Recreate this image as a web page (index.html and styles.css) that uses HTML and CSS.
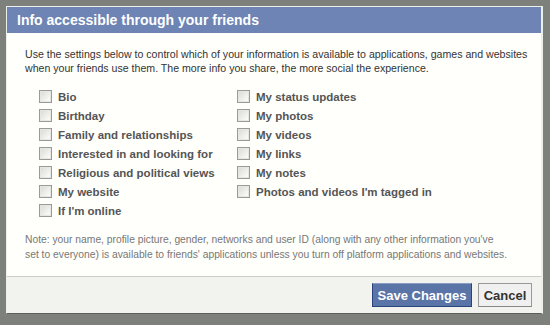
FILE: index.html
```html
<!DOCTYPE html>
<html>
<head>
<meta charset="utf-8">
<link rel="stylesheet" href="styles.css">
</head>
<body>
<div class="page">
  <div class="dialog">
    <div class="header">Info accessible through your friends</div>
    <div class="content">
      <p class="intro">Use the settings below to control which of your information is available to applications, games and websites<br>when your friends use them. The more info you share, the more social the experience.</p>
      <div class="options">
        <div class="col">
          <label class="opt"><span class="box"></span>Bio</label>
          <label class="opt"><span class="box"></span>Birthday</label>
          <label class="opt"><span class="box"></span>Family and relationships</label>
          <label class="opt"><span class="box"></span>Interested in and looking for</label>
          <label class="opt"><span class="box"></span>Religious and political views</label>
          <label class="opt"><span class="box"></span>My website</label>
          <label class="opt"><span class="box"></span>If I'm online</label>
        </div>
        <div class="col">
          <label class="opt"><span class="box"></span>My status updates</label>
          <label class="opt"><span class="box"></span>My photos</label>
          <label class="opt"><span class="box"></span>My videos</label>
          <label class="opt"><span class="box"></span>My links</label>
          <label class="opt"><span class="box"></span>My notes</label>
          <label class="opt"><span class="box"></span>Photos and videos I'm tagged in</label>
        </div>
      </div>
      <p class="note">Note: your name, profile picture, gender, networks and user ID (along with any other information you've<br>set to everyone) is available to friends' applications unless you turn off platform applications and websites.</p>
    </div>
    <div class="footer">
      <button class="btn save">Save Changes</button>
      <button class="btn cancel">Cancel</button>
    </div>
  </div>
</div>
</body>
</html>
```

FILE: styles.css
```css
html, body {
  margin: 0;
  padding: 0;
  background: #7e807c;
}
.page {
  width: 550px;
  height: 325px;
  padding: 6px 0 0 6px;
  box-sizing: border-box;
  overflow: hidden;
  font-family: "Liberation Sans", Arial, sans-serif;
}
.dialog {
  width: 537px;
  border: 1px solid #eeeeea;
  border-right-width: 2px;
  border-bottom-color: #5c5e5a;
  background: #fffffb;
  box-sizing: border-box;
}
.header {
  height: 26px;
  background: #6d84b4;
  color: #ffffff;
  font-weight: bold;
  font-size: 14px;
  line-height: 26px;
  padding-left: 10px;
}
.content {
  padding: 14px 2px 0 18px;
  height: 243px;
  box-sizing: border-box;
  color: #333333;
}
.intro {
  margin: 0;
  font-size: 10.6px;
  line-height: 14px;
}
.options {
  display: grid;
  grid-template-columns: 198px 1fr;
  padding: 12px 0 0 14px;
}
.col {
  display: flex;
  flex-direction: column;
}
.opt {
  display: flex;
  align-items: center;
  height: 19px;
  font-size: 11.5px;
  font-weight: bold;
  color: #555555;
}
.box {
  width: 13px;
  height: 13px;
  box-sizing: border-box;
  border: 1px solid #9a9a9a;
  background: linear-gradient(135deg, #d8d8d4 0%, #f4f4f2 70%, #ffffff 100%);
  box-shadow: inset 0 0 0 1px #e6e6e2;
  margin-right: 6px;
  flex: none;
}
.note {
  margin: 12px 0 0 0;
  font-size: 10.3px;
  line-height: 15px;
  color: #777777;
}
.footer {
  height: 36px;
  border-top: 1px solid #cccccc;
  background: #f2f2ee;
  display: flex;
  justify-content: flex-end;
  align-items: center;
  gap: 6px;
  padding-right: 9px;
}
.btn {
  height: 24px;
  font-family: "Liberation Sans", Arial, sans-serif;
  font-weight: bold;
  font-size: 13px;
  padding: 0 4px;
  margin: 0;
  cursor: pointer;
}
.save {
  width: 100px;
  background: #5b74a8;
  color: #ffffff;
  border: 1px solid #29447e;
  border-top-color: #8a9cc2;
}
.cancel {
  width: 54px;
  background: #f0f0f0;
  color: #333333;
  border: 1px solid #999999;
  border-bottom-color: #888888;
}
```
